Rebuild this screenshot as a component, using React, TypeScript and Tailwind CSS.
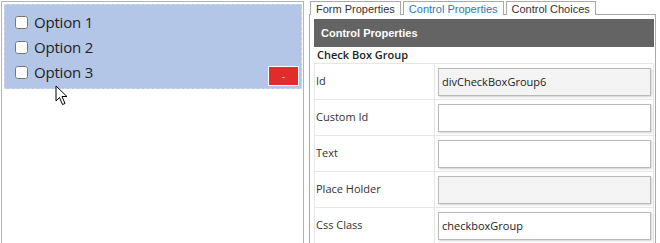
import React from 'react';

const options = ['Option 1', 'Option 2', 'Option 3'];

const rows: { label: string; value: string; readOnly: boolean }[] = [
  { label: 'Id', value: 'divCheckBoxGroup6', readOnly: true },
  { label: 'Custom Id', value: '', readOnly: false },
  { label: 'Text', value: '', readOnly: false },
  { label: 'Place Holder', value: '', readOnly: true },
  { label: 'Css Class', value: 'checkboxGroup', readOnly: false },
];

const tabs = ['Form Properties', 'Control Properties', 'Control Choices'];

const Cursor: React.FC = () => (
  <svg className="absolute left-[55px] top-[85px]" width="14" height="22" viewBox="0 0 14 22">
    <path
      d="M1 1 L1 16 L4.5 12.5 L7.5 19.5 L10 18.5 L7 11.5 L12 11.5 Z"
      fill="#ffffff"
      stroke="#000000"
      strokeWidth="1"
      strokeLinejoin="miter"
    />
  </svg>
);

const App: React.FC = () => {
  return (
    <div className="relative flex w-[660px] h-[243px] overflow-hidden bg-white font-['Open_Sans',sans-serif]">
      {/* designer canvas */}
      <div className="ml-[1px] mt-[1px] w-[303px] h-[260px] border border-[#b4b4b4] pl-[2px] pr-[1px] pt-[2px] shrink-0">
        <div className="flex h-[85px] bg-[#b3c6e7] border border-dashed border-[#cfd9ec]">
          <div className="flex flex-col pt-[5px] pl-[10px] flex-1">
            {options.map(opt => (
              <label key={opt} className="flex items-center h-[25px] text-[15px] text-[#222] tracking-[-0.2px]">
                <input type="checkbox" className="w-[13px] h-[13px] mr-[6px] accent-white" />
                <span>{opt}</span>
              </label>
            ))}
          </div>
          <div className="self-end mb-[2px] mr-[2px]">
            <button className="w-[31px] h-[20px] bg-[#e22b2b] border border-white text-white text-[9px] leading-none font-['Liberation_Sans',sans-serif] flex items-center justify-center pt-[3px]">
              -
            </button>
          </div>
        </div>
      </div>
      <Cursor />

      {/* property panel */}
      <div className="ml-[5px] flex flex-col w-[347px] shrink-0 font-['Liberation_Sans',sans-serif]">
        <div className="flex gap-[2px] mt-[1px] pl-[1px] h-[13px]">
          {tabs.map((tab, i) => (
            <div
              key={tab}
              className={`h-[14px] px-[5px] border border-b-0 border-[#aaa] text-[11px] leading-[12px] pt-[1px] z-10 bg-white ${
                i === 1 ? 'text-[#1f7bc4]' : 'text-[#333]'
              }`}
            >
              {tab}
            </div>
          ))}
        </div>
        <div className="flex-1 border border-[#aaa] pl-[4px] pr-[1px] pt-[4px]">
          <div className="h-[28px] bg-[#646464] flex items-center pl-[7px] text-white text-[11px] font-bold">
            Control Properties
          </div>
          <div className="h-[16px] flex items-center pl-[3px] pt-[1px] text-[11px] font-semibold text-[#222] font-['Open_Sans',sans-serif]">
            Check Box Group
          </div>
          <div className="border-t border-l border-r border-[#e6e6e6] font-['Open_Sans',sans-serif]">
            {rows.map(row => (
              <div key={row.label} className="flex h-[36px] border-b border-[#e6e6e6]">
                <div className="w-[120px] border-r border-[#e6e6e6] flex items-center pl-[1px] text-[11px] text-[#333]">
                  {row.label}
                </div>
                <div className="flex-1 flex items-center pl-[3px] pr-[2px]">
                  <input
                    type="text"
                    readOnly
                    value={row.value}
                    className={`w-[213px] h-[28px] px-[3px] border border-[#b9b9b9] shadow-[1px_1px_2px_rgba(0,0,0,0.18)] text-[11px] text-[#222] outline-none ${
                      row.readOnly ? 'bg-[#f4f4f4]' : 'bg-white'
                    }`}
                  />
                </div>
              </div>
            ))}
          </div>
        </div>
      </div>
    </div>
  );
};

export default App;
